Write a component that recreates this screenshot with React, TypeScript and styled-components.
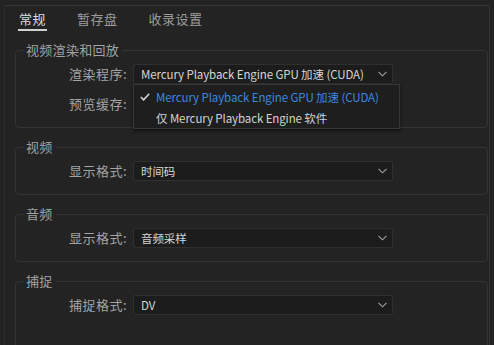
import { createGlobalStyle, styled } from "styled-components";

const GlobalStyle = createGlobalStyle`
  html, body {
    margin: 0;
    padding: 0;
    height: 100%;
    overflow: hidden;
    background-color: #1f1f1f;
  }
  body {
    font-family: "Noto Sans CJK SC", sans-serif;
    color: #a8a8a8;
  }
`;

const Page = styled.div`
  width: 494px;
  height: 345px;
  background-color: #232323;
  padding-top: 5px;
  box-sizing: border-box;
  overflow: hidden;
`;

const Panel = styled.div`
  margin-left: 4px;
  width: 486px;
  height: 340px;
  box-sizing: border-box;
  border-top: 1px solid #363636;
  border-left: 1px solid #2e2e2e;
  border-right: 1px solid #333333;
  padding-right: 1px;
  overflow: hidden;
`;

const TabBar = styled.div`
  display: flex;
  gap: 29px;
  padding: 4px 0 0 13px;
  height: 25px;
  box-sizing: border-box;
`;

const Tab = styled.div<{ $active?: boolean }>`
  font-size: 13px;
  line-height: 18px;
  padding: 0 1px 1px;
  color: ${(p) => (p.$active ? "#dedede" : "#9c9c9c")};
  border-bottom: 2px solid ${(p) => (p.$active ? "#d0d0d0" : "transparent")};
  letter-spacing: 0.5px;
`;

const Group = styled.fieldset<{ $tall?: boolean }>`
  margin: 11px 0 0 10px;
  border: 1px solid #333333;
  border-radius: 4px;
  padding: 6px 8px ${(p) => (p.$tall ? "60px" : "13px")};
  min-inline-size: 0;
`;

const Legend = styled.legend`
  font-size: 13px;
  line-height: 16px;
  padding: 0 3px 0 2px;
  color: #a2a2a2;
  letter-spacing: 0.3px;
`;

const Rows = styled.div`
  display: grid;
  grid-template-columns: 104px 260px;
  column-gap: 5px;
  row-gap: 10px;
  align-items: center;
`;

const Label = styled.div`
  font-size: 13px;
  line-height: 20px;
  text-align: right;
  color: #a4a4a4;
  letter-spacing: 0.5px;
  padding-right: 1px;
`;

const SelectWrap = styled.div`
  position: relative;
`;

const Select = styled.div`
  display: flex;
  align-items: center;
  justify-content: space-between;
  height: 20px;
  box-sizing: border-box;
  padding: 0 5px 0 7px;
  background-color: #1c1c1c;
  border: 1px solid #2f2f2f;
  border-radius: 2px;
  font-size: 11.5px;
  letter-spacing: -0.1px;
  color: #d6d6d6;
  white-space: nowrap;
`;

const Chevron = styled.svg`
  width: 9px;
  height: 6px;
  flex: none;
`;

const Menu = styled.div`
  position: absolute;
  top: 100%;
  left: 0;
  width: 267px;
  box-sizing: border-box;
  padding: 1px 0 0;
  background-color: #1e1e1e;
  border: 1px solid #363636;
  box-shadow: 0 2px 3px rgba(0, 0, 0, 0.5);
  z-index: 2;
`;

const MenuItem = styled.div<{ $selected?: boolean }>`
  display: flex;
  align-items: center;
  height: 21px;
  padding-left: 6px;
  font-size: 11.5px;
  letter-spacing: -0.1px;
  white-space: nowrap;
  color: ${(p) => (p.$selected ? "#3b87e0" : "#d2d2d2")};
`;

const CheckSlot = styled.span`
  display: flex;
  align-items: center;
  width: 16px;
  flex: none;
`;

const Empty = styled.div``;

function Down() {
  return (
    <Chevron viewBox="0 0 9 6">
      <polyline points="0.5,0.8 4.5,4.8 8.5,0.8" fill="none" stroke="#a0a0a0" strokeWidth="1.1" />
    </Chevron>
  );
}

function Check() {
  return (
    <svg width="10" height="8" viewBox="0 0 10 8">
      <polyline points="0.8,4 3.6,6.8 9.2,0.8" fill="none" stroke="#d8d8d8" strokeWidth="1.5" />
    </svg>
  );
}

type Option = { label: string };

function Dropdown({ value, options }: { value: string; options?: Option[] }) {
  return (
    <SelectWrap>
      <Select>
        <span>{value}</span>
        <Down />
      </Select>
      {options ? (
        <Menu>
          {options.map((o) => (
            <MenuItem key={o.label} $selected={o.label === value}>
              <CheckSlot>{o.label === value ? <Check /> : null}</CheckSlot>
              {o.label}
            </MenuItem>
          ))}
        </Menu>
      ) : null}
    </SelectWrap>
  );
}

const renderers: Option[] = [
  { label: "Mercury Playback Engine GPU 加速 (CUDA)" },
  { label: "仅 Mercury Playback Engine 软件" },
];

export default function App() {
  return (
    <>
      <GlobalStyle />
      <Page>
        <Panel>
          <TabBar>
            <Tab $active>常规</Tab>
            <Tab>暂存盘</Tab>
            <Tab>收录设置</Tab>
          </TabBar>

          <Group>
            <Legend>视频渲染和回放</Legend>
            <Rows>
              <Label>渲染程序:</Label>
              <Dropdown value={renderers[0].label} options={renderers} />
              <Label>预览缓存:</Label>
              <Empty />
            </Rows>
          </Group>

          <Group>
            <Legend>视频</Legend>
            <Rows>
              <Label>显示格式:</Label>
              <Dropdown value="时间码" />
            </Rows>
          </Group>

          <Group>
            <Legend>音频</Legend>
            <Rows>
              <Label>显示格式:</Label>
              <Dropdown value="音频采样" />
            </Rows>
          </Group>

          <Group $tall>
            <Legend>捕捉</Legend>
            <Rows>
              <Label>捕捉格式:</Label>
              <Dropdown value="DV" />
            </Rows>
          </Group>
        </Panel>
      </Page>
    </>
  );
}
